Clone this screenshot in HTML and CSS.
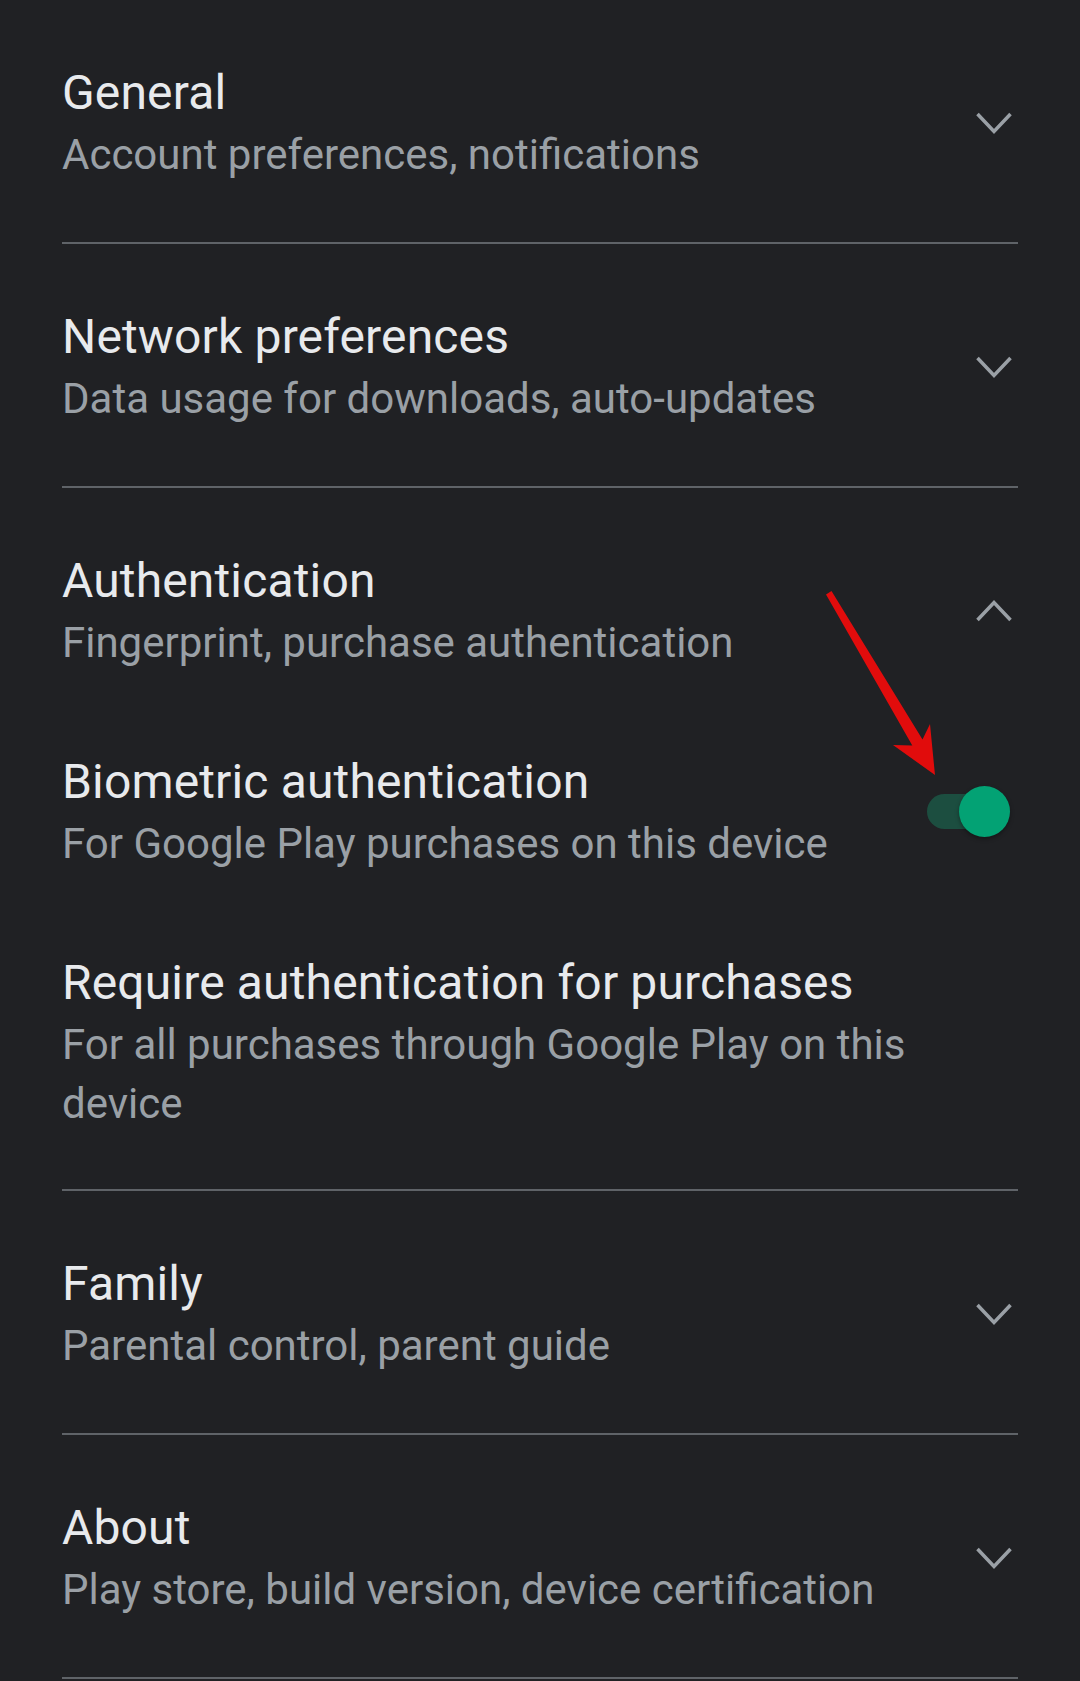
FILE: index.html
```html
<!DOCTYPE html>
<html lang="en">
<head>
    <meta charset="UTF-8">
    <meta name="viewport" content="width=device-width, initial-scale=1.0">
    <title>Settings</title>
    <link rel="stylesheet" href="styles.css">
</head>
<body>
    <div class="settings">
        <!-- General -->
        <section class="group">
            <div class="group-header">
                <div class="text">
                    <div class="title">General</div>
                    <div class="subtitle">Account preferences, notifications</div>
                </div>
                <svg class="chevron" viewBox="0 0 40 26" width="40" height="26"><polyline points="3.5,4 20,21.5 36.5,4"/></svg>
            </div>
        </section>

        <!-- Network preferences -->
        <section class="group">
            <div class="group-header">
                <div class="text">
                    <div class="title">Network preferences</div>
                    <div class="subtitle">Data usage for downloads, auto-updates</div>
                </div>
                <svg class="chevron" viewBox="0 0 40 26" width="40" height="26"><polyline points="3.5,4 20,21.5 36.5,4"/></svg>
            </div>
        </section>

        <!-- Authentication (expanded) -->
        <section class="group open">
            <div class="group-header">
                <div class="text">
                    <div class="title">Authentication</div>
                    <div class="subtitle">Fingerprint, purchase authentication</div>
                </div>
                <svg class="chevron" viewBox="0 0 40 26" width="40" height="26"><polyline points="3.5,22 20,4.5 36.5,22"/></svg>
            </div>

            <div class="sub-item">
                <div class="text">
                    <div class="title">Biometric authentication</div>
                    <div class="subtitle">For Google Play purchases on this device</div>
                </div>
                <div class="switch on">
                    <span class="track"></span>
                    <span class="knob"></span>
                </div>
            </div>

            <div class="sub-item">
                <div class="text narrow">
                    <div class="title">Require authentication for purchases</div>
                    <div class="subtitle">For all purchases through Google Play on this device</div>
                </div>
            </div>

            <!-- annotation arrow -->
            <svg class="pointer" viewBox="820 585 120 195" width="120" height="195">
                <polygon points="826,594.5 831.5,591 922.5,739.5 930,724 935,775 893,745 912.3,745.5"/>
            </svg>
        </section>

        <!-- Family -->
        <section class="group">
            <div class="group-header">
                <div class="text">
                    <div class="title">Family</div>
                    <div class="subtitle">Parental control, parent guide</div>
                </div>
                <svg class="chevron" viewBox="0 0 40 26" width="40" height="26"><polyline points="3.5,4 20,21.5 36.5,4"/></svg>
            </div>
        </section>

        <!-- About -->
        <section class="group">
            <div class="group-header">
                <div class="text">
                    <div class="title">About</div>
                    <div class="subtitle">Play store, build version, device certification</div>
                </div>
                <svg class="chevron" viewBox="0 0 40 26" width="40" height="26"><polyline points="3.5,4 20,21.5 36.5,4"/></svg>
            </div>
        </section>
    </div>
</body>
</html>
```

FILE: styles.css
```css
* {
    box-sizing: border-box;
}
body {
    margin: 0;
    background-color: #202124;
    font-family: Roboto, "Noto Sans", Arial, sans-serif;
    overflow: hidden;
}
.settings {
    position: relative;
    padding: 0 62px;
}
.group {
    position: relative;
    padding: 61px 0 58px;
    border-bottom: 2px solid #5f6368;
}
.group.open {
    padding-bottom: 56px;
}
.group-header,
.sub-item {
    display: flex;
    align-items: center;
    justify-content: space-between;
}
.sub-item {
    margin-top: 78px;
}
.text.narrow {
    max-width: 880px;
}
.title {
    font-size: 48px;
    line-height: 64px;
    letter-spacing: 0.15px;
    color: #e8eaed;
}
.subtitle {
    font-size: 42px;
    line-height: 59px;
    color: #9aa0a6;
}
.chevron {
    flex-shrink: 0;
    margin-right: 4px;
}
.chevron polyline {
    fill: none;
    stroke: #9aa0a6;
    stroke-width: 3.5;
}

/* toggle switch */
.switch {
    position: relative;
    flex-shrink: 0;
    width: 83px;
    height: 51px;
    margin-right: 8px;
}
.switch .track {
    position: absolute;
    left: 0;
    top: 8px;
    width: 75px;
    height: 35px;
    border-radius: 18px;
    background-color: #1c4e40;
}
.switch .knob {
    position: absolute;
    right: 0;
    top: 0;
    width: 51px;
    height: 51px;
    border-radius: 50%;
    background-color: #03a274;
    box-shadow: 0 2px 4px rgba(0, 0, 0, 0.35);
}

/* red annotation arrow */
.pointer {
    position: absolute;
    left: 758px;
    top: 97px;
    pointer-events: none;
}
.pointer polygon {
    fill: #e10c0c;
}
```
